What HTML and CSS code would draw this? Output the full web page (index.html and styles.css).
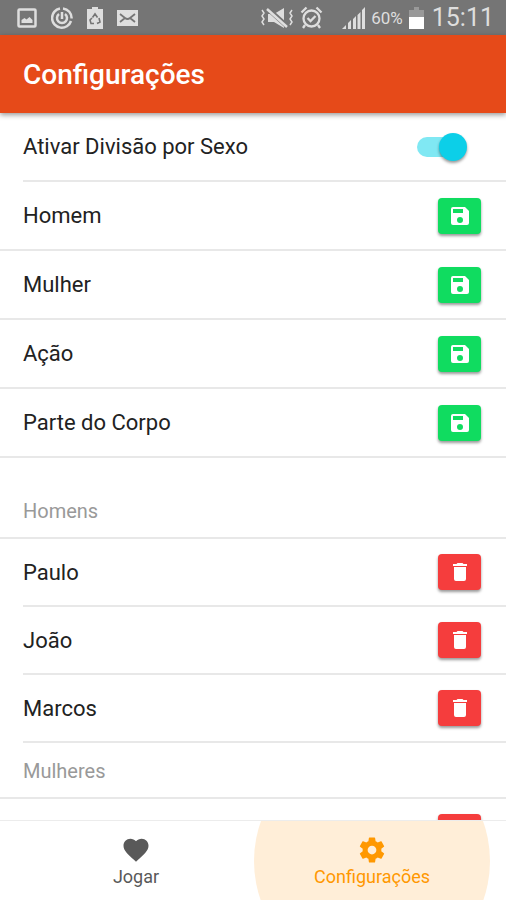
FILE: index.html
```html
<!DOCTYPE html>
<html lang="pt-BR">
<head>
    <meta charset="UTF-8">
    <meta name="viewport" content="width=device-width, initial-scale=1.0">
    <title>Configurações</title>
    <link rel="stylesheet" href="styles.css">
</head>
<body>

    <!-- Icons used more than once -->
    <svg class="icon-defs" aria-hidden="true">
        <symbol id="save" viewBox="0 0 24 24">
            <path d="M17 3H5a2 2 0 0 0-2 2v14a2 2 0 0 0 2 2h14a2 2 0 0 0 2-2V7l-4-4zm-5 16a3 3 0 1 1 0-6 3 3 0 0 1 0 6zm3-10H5V5h10v4z"/>
        </symbol>
        <symbol id="trash" viewBox="0 0 24 24">
            <path d="M6 19a2 2 0 0 0 2 2h8a2 2 0 0 0 2-2V7H6v12zM19 4h-3.500l-1-1h-5l-1 1H5v2h14V4z"/>
        </symbol>
    </svg>

    <div class="status-bar">
        <div class="status-group status-left">
            <svg width="20" height="20" viewBox="0 0 20 20">
                <rect x="1.500" y="1.500" width="17" height="17" rx="1" fill="none" stroke="currentColor" stroke-width="2.500"/>
                <path d="M4.500 15v-3l3-2 2 1.500 3-2.500 3 3v3z"/>
            </svg>
            <svg class="line-icon" width="22" height="22" viewBox="0 0 22 22" stroke-width="2.500">
                <path d="M9 1.500A9.700 9.700 0 1 0 20 14M12 1.400A9.700 9.700 0 0 1 20.600 11.500"/>
                <path d="M8 7a5 5 0 1 0 6 0M11 5v7"/>
            </svg>
            <svg width="16" height="22" viewBox="0 0 16 22">
                <path d="M5 0h6v2h5v20H0V2h5z"/>
                <path d="M5.500 10.500L8 7l2.500 3.500M12 11l1 4-3 1.500M7 16.500H4L3 13l2-2" fill="none" stroke="#757575" stroke-width="1.600"/>
            </svg>
            <svg width="21" height="16" viewBox="0 0 21 16">
                <path d="M0 0h21v16H0z"/>
                <path d="M3 4l5 4q2.500 2 5 0l5-4M3 12l5-4M18 12l-5-4" fill="none" stroke="#757575" stroke-width="1.800"/>
            </svg>
        </div>
        <div class="status-group status-right">
            <svg width="34" height="22" viewBox="0 0 34 22">
                <path d="M8 7h6l10-6v20l-10-6H8z"/>
                <path d="M8 2l20 18" stroke="#757575" stroke-width="5"/>
                <path d="M7 2l20 18" stroke="currentColor" stroke-width="2.500"/>
                <path d="M2 3l2 3-2 3 2 3-2 3 2 3M32 3l-2 3 2 3-2 3 2 3-2 3" fill="none" stroke="currentColor" stroke-width="1.500"/>
            </svg>
            <svg class="line-icon alarm" width="23" height="23" viewBox="0 0 23 23" stroke-width="2.300">
                <circle cx="11.500" cy="12.500" r="8"/>
                <path d="M1.500 6.500l5-5M21.500 6.500l-5-5M5 19l-2 3M18 19l2 3M7.500 12l3 3 5-5"/>
            </svg>
            <svg width="23" height="22" viewBox="0 0 23 22">
                <path d="M0 22l4-4v4zM6 16l3-3v9H6zM11 12l3-3v13h-3zM15.500 8l3-3v17h-3zM20 3l3-3v22h-3z"/>
            </svg>
            <span class="battery-level">60%</span>
            <svg width="15" height="22" viewBox="0 0 15 22">
                <path d="M5 0h5v3h5v7H0V3h5z" fill="#999"/>
                <path d="M0 10h15v12H0z" fill="#fff"/>
            </svg>
            <span class="clock">15:11</span>
        </div>
    </div>

    <header class="toolbar">
        <h1>Configurações</h1>
    </header>

    <main class="content">
        <!-- General options -->
        <ul class="list">
            <li class="item inset">
                <label for="splitBySex">Ativar Divisão por Sexo</label>
                <input type="checkbox" class="toggle" id="splitBySex" role="switch" checked>
            </li>
            <li class="item">
                <span>Homem</span>
                <button type="button" class="btn save" aria-label="Salvar Homem"><svg><use href="#save"/></svg></button>
            </li>
            <li class="item">
                <span>Mulher</span>
                <button type="button" class="btn save" aria-label="Salvar Mulher"><svg><use href="#save"/></svg></button>
            </li>
            <li class="item">
                <span>Ação</span>
                <button type="button" class="btn save" aria-label="Salvar Ação"><svg><use href="#save"/></svg></button>
            </li>
            <li class="item">
                <span>Parte do Corpo</span>
                <button type="button" class="btn save" aria-label="Salvar Parte do Corpo"><svg><use href="#save"/></svg></button>
            </li>
        </ul>

        <!-- Registered players -->
        <section class="players">
            <h2>Homens</h2>
            <ul class="list">
                <li class="item inset">
                    <span>Paulo</span>
                    <button type="button" class="btn delete" aria-label="Excluir Paulo"><svg><use href="#trash"/></svg></button>
                </li>
                <li class="item inset">
                    <span>João</span>
                    <button type="button" class="btn delete" aria-label="Excluir João"><svg><use href="#trash"/></svg></button>
                </li>
                <li class="item inset">
                    <span>Marcos</span>
                    <button type="button" class="btn delete" aria-label="Excluir Marcos"><svg><use href="#trash"/></svg></button>
                </li>
            </ul>

            <h2>Mulheres</h2>
            <ul class="list">
                <li class="item inset">
                    <span></span>
                    <button type="button" class="btn delete" aria-label="Excluir"><svg><use href="#trash"/></svg></button>
                </li>
            </ul>
        </section>
    </main>

    <nav class="tabs">
        <a href="#jogar" class="tab">
            <svg viewBox="0 0 24 24"><path d="M12 21.350l-1.450-1.320C5.400 15.360 2 12.280 2 8.500 2 5.420 4.420 3 7.500 3c1.740 0 3.410.81 4.500 2.090C13.090 3.810 14.760 3 16.500 3 19.580 3 22 5.420 22 8.500c0 3.780-3.400 6.860-8.550 11.540z"/></svg>
            <span>Jogar</span>
        </a>
        <a href="#configuracoes" class="tab active" aria-current="page">
            <svg viewBox="0 0 24 24"><path d="M19.430 12.980c.04-.32.07-.64.07-.98s-.03-.66-.07-.98l2.110-1.650c.19-.15.24-.42.12-.64l-2-3.460c-.12-.22-.39-.3-.61-.22l-2.490 1c-.52-.4-1.080-.73-1.690-.98l-.38-2.650C14.460 2.180 14.250 2 14 2h-4c-.25 0-.46.18-.49.42l-.38 2.650c-.61.25-1.170.59-1.690.98l-2.490-1c-.23-.09-.49 0-.61.22l-2 3.460c-.13.22-.07.49.12.64l2.110 1.650c-.04.32-.07.65-.07.98s.03.66.07.98l-2.110 1.650c-.19.15-.24.42-.12.64l2 3.460c.12.22.39.3.61.22l2.490-1c.52.4 1.080.73 1.690.98l.38 2.650c.03.24.24.42.49.42h4c.25 0 .46-.18.49-.42l.38-2.650c.61-.25 1.170-.59 1.690-.98l2.490 1c.23.09.49 0 .61-.22l2-3.460c.12-.22.07-.49-.12-.64l-2.110-1.650zM12 15.500a3.500 3.500 0 1 1 0-7 3.500 3.500 0 0 1 0 7z"/></svg>
            <span>Configurações</span>
        </a>
    </nav>

</body>
</html>
```
FILE: styles.css
```css
* {
    box-sizing: border-box;
}
body {
    display: flex;
    flex-direction: column;
    height: 100vh;
    margin: 0;
    background-color: #fff;
    color: #222;
    font-family: Roboto, sans-serif;
    font-size: 22px;
}
svg {
    fill: currentColor;
}
.line-icon {
    fill: none;
    stroke: currentColor;
}
.icon-defs {
    display: none;
}
.status-bar {
    display: flex;
    flex: none;
    align-items: center;
    justify-content: space-between;
    height: 35px;
    padding: 0 12px 0 17px;
    background-color: #757575;
    color: #dedede;
}
.status-group {
    display: flex;
    align-items: center;
}
.status-left {
    gap: 14px;
}
.status-right {
    gap: 6px;
}
.alarm {
    margin-right: 13px;
}
.battery-level {
    font-size: 17px;
}
.clock {
    margin-left: 2px;
    font-size: 25px;
    line-height: 34px;
}
.toolbar {
    display: flex;
    flex: none;
    align-items: center;
    position: relative;
    height: 78px;
    padding: 0 23px;
    background-color: #e64a19;
    box-shadow: 0 2px 5px rgba(0, 0, 0, 0.4);
}
.toolbar h1 {
    margin: 0;
    color: #fff;
    font-size: 28px;
    font-weight: 500;
}
.content {
    flex: 1;
    min-height: 0;
    overflow: hidden;
}
.list {
    margin: 0;
    padding: 0;
    list-style: none;
}
.item {
    display: flex;
    align-items: center;
    justify-content: space-between;
    height: 69px;
    padding: 0 25px 0 23px;
    border-bottom: 2px solid #e8e8e8;
}
.item.inset {
    margin-left: 23px;
    padding-left: 0;
}
.players {
    margin-top: 25px;
}
.players .item {
    height: 68px;
}
.players h2 {
    height: 56px;
    margin: 0;
    padding: 0 23px;
    border-bottom: 2px solid #e8e8e8;
    color: #999;
    font-size: 20px;
    font-weight: 400;
    line-height: 56px;
}
.btn {
    display: flex;
    align-items: center;
    justify-content: center;
    width: 43px;
    height: 36px;
    padding: 0;
    border: none;
    border-radius: 4px;
    color: #fff;
    cursor: pointer;
    box-shadow: 0 2px 3px rgba(0, 0, 0, 0.4);
}
.btn svg {
    width: 24px;
    height: 24px;
}
.btn.save {
    background-color: #10dc60;
}
.btn.delete {
    background-color: #f53d3d;
}
.toggle {
    position: relative;
    width: 48px;
    height: 20px;
    margin: 0 16px 0 0;
    border-radius: 10px;
    background-color: #80e8f3;
    appearance: none;
    cursor: pointer;
}
.toggle::before {
    content: "";
    position: absolute;
    top: -4px;
    right: -2px;
    width: 28px;
    height: 28px;
    border-radius: 50%;
    background-color: #0ccfe8;
    box-shadow: 0 2px 3px rgba(0, 0, 0, 0.4);
}
.tabs {
    display: flex;
    flex: none;
    height: 80px;
    padding: 0 16px 0 18px;
    border-top: 1px solid #ececec;
    background-color: #fff;
}
.tab {
    display: flex;
    flex: 1;
    flex-direction: column;
    align-items: center;
    justify-content: center;
    position: relative;
    overflow: hidden;
    padding-top: 3px;
    color: #595959;
    font-size: 18px;
    line-height: 24px;
    text-decoration: none;
}
.tab svg {
    position: relative;
    width: 30px;
    height: 30px;
}
.tab span {
    position: relative;
}
.tab.active {
    color: #ff9800;
}
/* touch ripple */
.tab.active::before {
    content: "";
    position: absolute;
    top: 50%;
    left: 0;
    width: 100%;
    aspect-ratio: 1;
    border-radius: 50%;
    background-color: #ffeed8;
    transform: translateY(-50%);
}
```
